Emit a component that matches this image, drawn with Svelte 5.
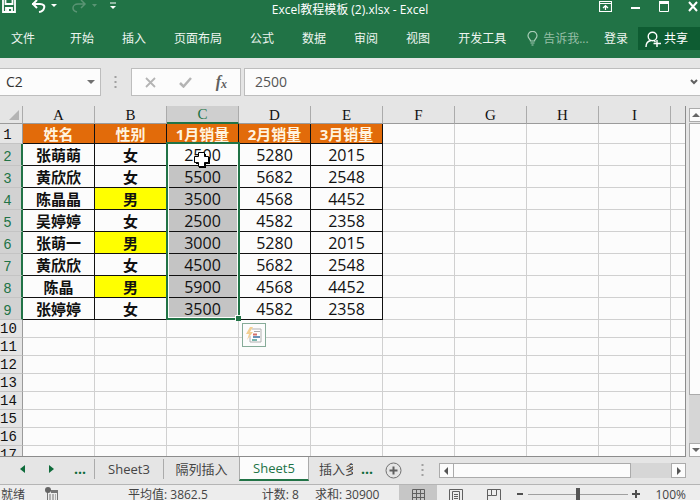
<script>
  const menus = ['开始', '插入', '页面布局', '公式', '数据', '审阅', '视图', '开发工具'];
  const columns = ['A', 'B', 'C', 'D', 'E', 'F', 'G', 'H', 'I', ''];
  const data = [
    ['姓名', '性别', '1月销量', '2月销量', '3月销量'],
    ['张萌萌', '女', '2500', '5280', '2015'],
    ['黄欣欣', '女', '5500', '5682', '2548'],
    ['陈晶晶', '男', '3500', '4568', '4452'],
    ['吴婷婷', '女', '2500', '4582', '2358'],
    ['张萌一', '男', '3000', '5280', '2015'],
    ['黄欣欣', '女', '4500', '5682', '2548'],
    ['陈晶', '男', '5900', '4568', '4452'],
    ['张婷婷', '女', '3500', '4582', '2358']
  ];
  const rows = Array.from({ length: 17 }, (_, i) => data[i] ?? []);
  let nameBox = $state('C2');
  let formula = $state('2500');
  let zoom = $state(50);
</script>

<div class="app">
  <header>
    <div class="titlebar">
      <div class="quick">
        <button aria-label="保存">
          <svg width="14" height="14" viewBox="0 0 14 14"><path d="M1 0v12h12V0M3.500 0v4h7V0M4 12V8h6v4" fill="none" stroke="#fff" stroke-width="1.800" /><path d="M5 9h2v3H5z" fill="#fff" /></svg>
        </button>
        <button class="undo" aria-label="撤消">
          <svg width="26" height="14" viewBox="0 0 26 14"><path d="M1 4h8c3.500 0 5 2 4 4.200C12.500 10 11 11.500 8 12M6 0L2 4l4 4" fill="none" stroke="#fff" stroke-width="2" /><path d="M20 4h6l-3 3z" fill="#fff" /></svg>
        </button>
        <button class="redo" aria-label="恢复">
          <svg width="26" height="14" viewBox="0 0 26 14"><path d="M13 4H6C3 4 1 6 1 8c0 2 2 3.500 4 4M9 0l4 4-4 4" fill="none" stroke="#5a9474" stroke-width="1.500" /><path d="M20 4h5l-2.500 3z" fill="#5a9474" /></svg>
        </button>
        <button class="more" aria-label="自定义快速访问工具栏">
          <svg width="6" height="8" viewBox="0 0 6 8"><path d="M0 1h6" stroke="#fff" /><path d="M0 4h6L3 7z" fill="#fff" /></svg>
        </button>
      </div>
      <div class="title">Excel教程模板 (2).xlsx - Excel</div>
      <div class="window">
        <button aria-label="功能区显示选项">
          <svg width="13" height="11" viewBox="0 0 13 11"><path d="M.5.5h12v10H.5zM.5 2.500h12M6.500 9V4.500M4 7l2.500-2.500L9 7" fill="none" stroke="#fff" stroke-width="1.200" /></svg>
        </button>
        <button aria-label="最小化">
          <svg width="9" height="11" viewBox="0 0 9 11"><path d="M0 7h9" stroke="#fff" stroke-width="2" /></svg>
        </button>
        <button aria-label="最大化">
          <svg width="10" height="11" viewBox="0 0 10 11"><path d="M.5 1h9v9.500h-9z" fill="none" stroke="#fff" /><path d="M0 0h10v3H0z" fill="#fff" /></svg>
        </button>
        <button aria-label="关闭">
          <svg width="10" height="11" viewBox="0 0 10 11"><path d="M1 1l8 9M9 1l-8 9" stroke="#fff" stroke-width="2" /></svg>
        </button>
      </div>
    </div>
    <nav>
      <button class="file">文件</button>
      {#each menus as m}<button>{m}</button>{/each}
      <button class="tell">
        <svg width="11" height="15" viewBox="0 0 11 15"><path d="M3.500 10C3.500 8 1 7.500 1 4.800a4.300 4.300 0 0 1 9 0C10 7.500 7.500 8 7.500 10zM3.500 12h4M4.500 14h2" fill="none" stroke="#a9cdb8" stroke-width="1.200" /></svg>
        告诉我...
      </button>
      <button class="login">登录</button>
      <button class="share">
        <svg width="16" height="16" viewBox="0 0 16 16"><circle cx="7.500" cy="5.500" r="4.300" fill="none" stroke="#fff" stroke-width="1.400" /><path d="M1 16c0-4 2-6 5-6.500M9 9.500l1.500 1.500M12 9v7M8.500 12.500H16" fill="none" stroke="#fff" stroke-width="1.400" /></svg>
        共享
      </button>
    </nav>
  </header>

  <div class="formula">
    <div class="namebox">
      <input aria-label="名称框" bind:value={nameBox} />
      <button aria-label="名称列表"><svg width="8" height="4" viewBox="0 0 8 4"><path d="M0 0h8L4 4z" fill="#707070" /></svg></button>
    </div>
    <svg class="grip" width="3" height="12" viewBox="0 0 3 12"><path d="M.5 1h2M.5 6h2M.5 11h2" stroke="#a0a0a0" stroke-width="2" /></svg>
    <div class="tools">
      <button aria-label="取消"><svg width="11" height="11" viewBox="0 0 11 11"><path d="M1 1l9 9M10 1l-9 9" stroke="#b4b4b4" stroke-width="1.800" /></svg></button>
      <button aria-label="输入"><svg width="13" height="11" viewBox="0 0 13 11"><path d="M1 6l3.500 3.500L12 1" fill="none" stroke="#b4b4b4" stroke-width="2.500" /></svg></button>
      <button class="fx" aria-label="插入函数">f<small>x</small></button>
    </div>
    <div class="value">
      <input aria-label="编辑栏" bind:value={formula} />
      <button aria-label="展开编辑栏"><svg width="10" height="6" viewBox="0 0 10 6"><path d="M1 1l3 3 3-3" fill="none" stroke="#606060" stroke-width="2" /></svg></button>
    </div>
  </div>

  <main>
    <div class="sheet">
      <table>
        <colgroup><col class="rowcol" />{#each columns as _}<col class="datacol" />{/each}</colgroup>
        <thead>
          <tr>
            <th class="corner" aria-label="全选"><svg width="10" height="10" viewBox="0 0 10 10"><path d="M10 0v10H0z" fill="#b4b4b4" /></svg></th>
            {#each columns as c}<th class:picked={c === 'C'}>{c}</th>{/each}
          </tr>
        </thead>
        <tbody>
          {#each rows as row, r}
            <tr class:head={r === 0} class:filled={r > 0 && r < 9}>
              <th>{r + 1}</th>
              {#each columns as _, c}
                <td
                  class:used={r < 9 && c < 5}
                  class:name={r < 9 && c < 2}
                  class:male={row[c] === '男'}
                  class:selected={c === 2 && r > 1 && r < 9}>{row[c] ?? ''}</td>
              {/each}
            </tr>
          {/each}
        </tbody>
      </table>
      <div class="selection"><i></i></div>
      <svg class="cursor" width="16" height="16" viewBox="0 0 16 16"><path d="M5 2h7v3h4v7h-4v4H5v-4H2V5h3z" fill="#000" /><path d="M4.500.5h6v4h4v6h-4v4h-6v-4h-4v-6h4z" fill="#fff" stroke="#000" /></svg>
      <button class="quickfill" aria-label="快速分析">
        <svg width="16" height="16" viewBox="0 0 16 16"><path d="M6 2h9v13H4V9" fill="#fff" stroke="#b0b0b0" /><path d="M4 0L0 7h3l-2 6 6-8H4l3-5z" fill="#f2cf92" /><path d="M8 4.500h6" stroke="#aaa" /><path d="M7 7.500h4" stroke="#d6706a" stroke-width="2" /><path d="M7 10h7" stroke="#6a93b8" stroke-width="2" /><path d="M6 13h5" stroke="#79b5ac" stroke-width="2" /></svg>
      </button>
    </div>
    <div class="vscroll">
      <button aria-label="向上滚动"><svg width="8" height="4" viewBox="0 0 8 4"><path d="M0 4h8L4 0z" fill="#666" /></svg></button>
      <div class="vthumb"></div>
      <div class="vtrack"></div>
      <button aria-label="向下滚动"><svg width="8" height="4" viewBox="0 0 8 4"><path d="M0 0h8L4 4z" fill="#666" /></svg></button>
    </div>
  </main>

  <div class="tabs">
    <div class="arrows">
      <button aria-label="上一个工作表"><svg width="5" height="8" viewBox="0 0 5 8"><path d="M5 0v8L0 4z" fill="#0e6b3a" /></svg></button>
      <button aria-label="下一个工作表"><svg width="5" height="8" viewBox="0 0 5 8"><path d="M0 0v8l5-4z" fill="#0e6b3a" /></svg></button>
      <button class="dots">...</button>
    </div>
    <button class="tab">Sheet3</button>
    <button class="tab wide">隔列插入</button>
    <button class="tab active">Sheet5</button>
    <button class="tab cut">插入多列</button>
    <button class="dots">...</button>
    <button class="add" aria-label="新工作表"><svg width="17" height="17" viewBox="0 0 17 17"><circle cx="8.500" cy="8.500" r="7.500" fill="none" stroke="#707070" /><path d="M4.500 8.500h8M8.500 4.500v8" stroke="#606060" stroke-width="2" /></svg></button>
    <svg class="grip2" width="3" height="12" viewBox="0 0 3 12"><path d="M.5 1h2M.5 6h2M.5 11h2" stroke="#a0a0a0" stroke-width="2" /></svg>
    <div class="hscroll">
      <button aria-label="向左滚动"><svg width="4" height="8" viewBox="0 0 4 8"><path d="M4 0v8L0 4z" fill="#555" /></svg></button>
      <div class="hthumb"></div>
      <div class="htrack"></div>
      <button aria-label="向右滚动"><svg width="4" height="8" viewBox="0 0 4 8"><path d="M0 0v8l4-4z" fill="#555" /></svg></button>
    </div>
  </div>

  <footer>
    <span class="ready">就绪</span>
    <svg class="macro" width="13" height="14" viewBox="0 0 13 14"><path d="M2.500 5v9M5 3.500h7.500V14" fill="none" stroke="#777" /><path d="M6 3h7v3H6z" fill="#777" /><circle cx="3" cy="3" r="3" fill="#666" /><path d="M4 8h2m1 0h2m1 0h1M4 10h2m1 0h2m1 0h1M4 12h2m1 0h2m1 0h1" stroke="#777" /></svg>
    <span class="avg">平均值: 3862.5</span>
    <span class="count">计数: 8</span>
    <span class="sum">求和: 30900</span>
    <button class="view on" aria-label="普通"><svg width="13" height="13" viewBox="0 0 13 13"><path d="M.5.5h12v12H.5zM4.500 0v13M8.500 0v13M0 4.500h13M0 8.500h13" fill="none" stroke="#606060" /></svg></button>
    <button class="view" aria-label="页面布局"><svg width="14" height="13" viewBox="0 0 14 13"><path d="M.5.5h13v12H.5zM3.500 2.500h7v10h-7zM5 5.500h4M5 7.500h4M5 9.500h4" fill="none" stroke="#606060" /></svg></button>
    <button class="view" aria-label="分页预览"><svg width="14" height="13" viewBox="0 0 14 13"><path d="M.5 13V.5h13V13M4.500 0v6.500h5V0M.5 6.500h4" fill="none" stroke="#606060" /></svg></button>
    <button class="minus" aria-label="缩小"><svg width="6" height="8" viewBox="0 0 6 8"><path d="M0 4h6" stroke="#505050" stroke-width="2" /></svg></button>
    <input class="zoom" type="range" aria-label="显示比例" bind:value={zoom} />
    <button class="plus" aria-label="放大"><svg width="8" height="8" viewBox="0 0 8 8"><path d="M0 4h8M4 0v8" stroke="#505050" stroke-width="2" /></svg></button>
    <span class="percent">100%</span>
  </footer>
</div>

<style>
  :global(body) { overflow: hidden; }
  * { box-sizing: border-box; }
  .app { display: flex; flex-direction: column; height: 100vh; overflow: hidden; background: #e5e5e5; color: #444; font: 12px/16px "Open Sans", "Noto Sans CJK SC", sans-serif; }
  button, input { font: inherit; color: inherit; border: 0; padding: 0; margin: 0; background: none; }
  button { display: flex; align-items: center; justify-content: center; flex: none; white-space: nowrap; }
  input { min-width: 0; outline: 0; }
  svg { display: block; flex: none; }

  header { background: #217346; color: #fff; flex: none; }
  .titlebar { display: grid; grid-template-columns: 1fr auto 1fr; height: 20px; }
  .quick { display: flex; align-items: flex-start; padding-left: 2px; }
  .undo { margin-left: 15px; }
  .redo { margin-left: 15px; }
  .more { margin: 2px 0 0 12px; }
  .title { line-height: 20px; }
  .window { display: flex; justify-content: flex-end; align-items: flex-start; gap: 19px; padding: 1px 2px 0 0; }
  nav { display: flex; align-items: center; height: 38px; padding-bottom: 1px; }
  nav button { height: 23px; padding: 0 14px; color: #edf5f0; }
  nav .file { padding: 0 21px 0 11px; }
  nav .tell { gap: 5px; padding: 0 4px 0 7px; color: #96bfa7; }
  nav .login { padding: 0 8px; margin-left: auto; }
  nav .share { gap: 3px; padding: 0 12px 0 7px; margin-left: 2px; background: #0e5c32; color: #fff; }

  .formula { display: flex; align-items: center; flex: none; height: 48px; font-size: 15px; }
  .namebox, .tools, .value { display: flex; align-items: center; height: 28px; border: 1px solid #bdbdbd; background: #fcfcfc; }
  .namebox { width: 101px; border-left: 0; padding: 0 5px 0 6px; }
  .namebox input { flex: 1; color: #333; font-size: 14px; }
  .grip { margin: 0 14px 0 13px; }
  .tools { width: 110px; justify-content: space-between; padding: 0 13px; }
  .fx { font: italic bold 16px/16px "Liberation Serif", serif; color: #606060; }
  .fx small { font-size: 12px; padding-top: 3px; }
  .value { flex: 1; margin-left: 3px; border-right: 0; padding: 0 0 0 10px; }
  .value input { flex: 1; font-size: 14px; color: #555; }

  main { display: flex; flex: 1; min-height: 0; }
  .sheet { position: relative; flex: 1; min-width: 0; overflow: hidden; background: #fcfcfc; border-right: 1px solid #8c8c8c; border-bottom: 1px solid #8c8c8c; }
  table { table-layout: fixed; width: 743px; border-collapse: separate; border-spacing: 0; color: #111; }
  .rowcol { width: 23px; }
  .datacol { width: 72px; }
  th, td { height: 18px; padding: 0; border-right: 1px solid #d0d0d0; border-bottom: 1px solid #d0d0d0; text-align: center; overflow: hidden; white-space: nowrap; }
  thead th { background: #e5e5e5; border-right-color: #ababab; border-bottom-color: #9b9b9b; font: 15px/16px "Liberation Serif", serif; }
  .corner svg { margin-left: 9px; }
  thead .picked { background: #cfcfcf; color: #217346; border-bottom: 2px solid #217346; }
  tbody th { background: #e5e5e5; border-right-color: #9b9b9b; border-bottom-color: #c4c4c4; padding-right: 7px; font: 14px/16px "Liberation Mono", monospace; vertical-align: bottom; }
  tbody tr.filled th { background: #d2d2d2; color: #217346; border-right: 2px solid #217346; padding-right: 6px; }
  .head th, .head td { height: 20px; }
  .filled th, .filled td { height: 22px; }
  .used { border-color: #111; font-size: 16px; line-height: 18px; }
  .name { font-weight: bold; font-size: 15px; }
  .head .used { background: #e26b0a; color: #fff3df; font-weight: bold; font-size: 15px; }
  .male { background: #ff0; }
  .selected { background: #c4c4c4; }
  .selection { position: absolute; left: 166px; top: 36px; width: 74px; height: 178px; border: 2px solid #217346; box-shadow: inset 0 0 0 1px #fcfcfc; }
  .selection i { position: absolute; right: -3px; bottom: -3px; width: 6px; height: 6px; background: #217346; border: 1px solid #fcfcfc; border-width: 1px 0 0 1px; }
  .cursor { position: absolute; left: 194px; top: 46px; }
  .quickfill { position: absolute; left: 242px; top: 217px; width: 24px; height: 24px; border: 1px solid #86ab98; background: #fcfcfc; }

  .vscroll { display: flex; flex-direction: column; flex: none; width: 14px; padding: 2px 0 0 3px; }
  .vscroll button, .vthumb { background: #fcfcfc; border: 1px solid #ababab; border-right: 0; }
  .vscroll button { height: 14px; width: 11px; padding-left: 2px; overflow: hidden; }
  .vthumb { flex: 17; margin-top: 1px; }
  .vtrack { flex: 3; background: #d6d6d6; }

  .tabs { display: flex; align-items: flex-start; flex: none; height: 27px; padding-right: 14px; font-size: 13px; }
  .tabs > * { margin-top: 2px; }
  .arrows { display: flex; align-items: center; gap: 24px; height: 20px; padding: 0 8px 0 20px; }
  .dots { height: 20px; color: #0e6b3a; font-weight: bold; font-size: 14px; }
  .arrows .dots { margin-left: -4px; }
  .tab { height: 20px; width: 69px; border-left: 1px solid #ababab; }
  .wide { width: 76px; }
  .active { height: 24px; width: 70px; margin-top: 0; background: #fcfcfc; color: #217346; border-right: 1px solid #ababab; border-bottom: 2px solid #217346; }
  .cut { display: block; width: 44px; border: 0; padding-left: 10px; overflow: hidden; text-align: left; }
  .tabs > .dots { margin-left: 8px; }
  .add { margin: 5px 0 0 12px; }
  .grip2 { margin: 7px 15px 0 19px; }
  .hscroll { display: flex; flex: 1; height: 15px; margin-top: 6px; background: #d6d6d6; }
  .hscroll button, .hthumb { background: #fcfcfc; border: 1px solid #ababab; }
  .hscroll button { width: 15px; }
  .hthumb { flex: 178; border-left: 0; }
  .htrack { flex: 40; }

  footer { display: flex; align-items: flex-start; flex: none; height: 16px; padding: 2px 14px 0 1px; border-top: 1px solid #b5b5b5; overflow: hidden; background: #ededed; white-space: nowrap; }
  footer > span { line-height: 16px; }
  .macro { margin-left: 20px; }
  .avg { margin-left: 70px; }
  .count { margin-left: auto; }
  .sum { margin-left: 16px; }
  .view { width: 38px; height: 17px; margin-top: -2px; padding-top: 3px; }
  .on { margin-left: 20px; background: #c6c6c6; }
  .minus { margin: 3px 5px 0 4px; }
  .plus { margin: 3px 0 0 4px; }
  .zoom { appearance: none; width: 100px; height: 14px; background: linear-gradient(#a0a0a0, #a0a0a0) center / 100% 1px no-repeat; }
  .zoom::-webkit-slider-thumb { appearance: none; width: 4px; height: 12px; background: #555; }
  .percent { margin-left: 15px; }
</style>
